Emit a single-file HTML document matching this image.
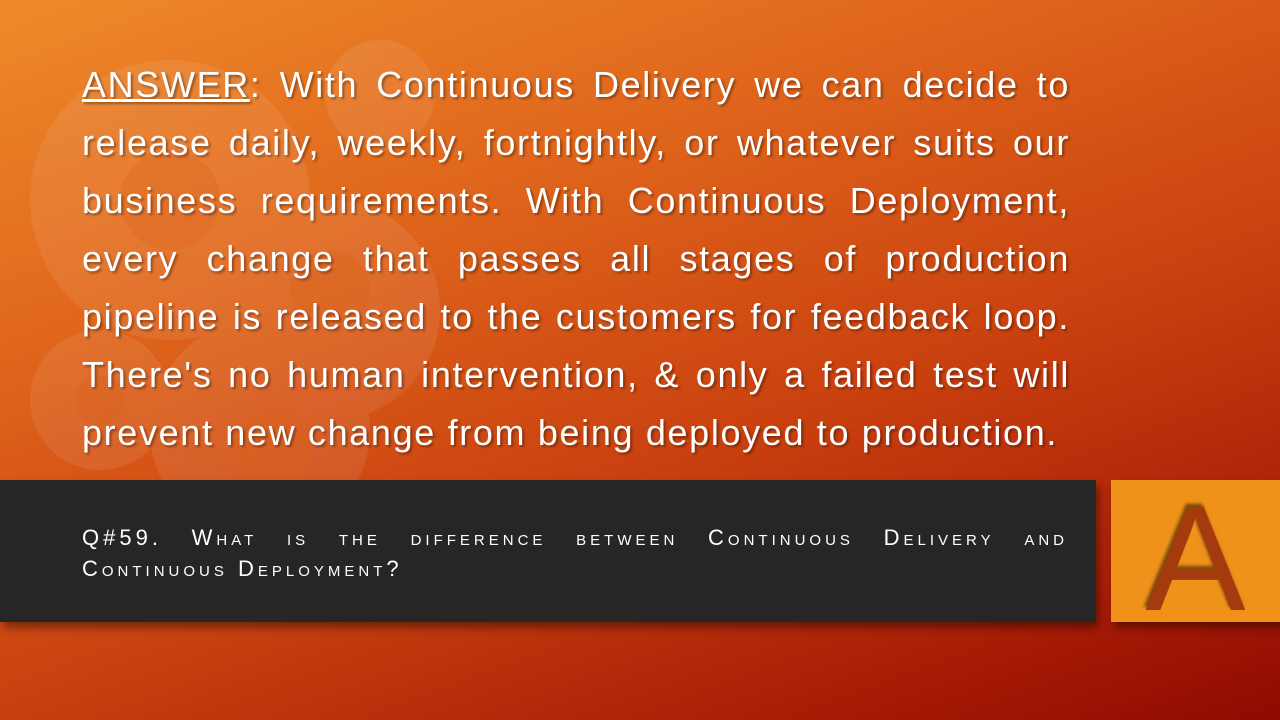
<!DOCTYPE html>
<html><head><meta charset="utf-8"><style>
body{margin:0;width:1280px;height:720px;overflow:hidden;position:relative;
background:linear-gradient(160deg,#ee8a2a 0%,#e0661c 30%,#c9400f 60%,#a81c06 85%,#8e0a00 100%);
font-family:"Liberation Sans",sans-serif;}
.gears{position:absolute;left:0;top:0}
.ans{position:absolute;left:82px;top:56px;width:988px;color:#fff;font-size:36px;line-height:58px;letter-spacing:1.65px;text-shadow:2px 2px 2px rgba(0,0,0,.35)}
.ans div{text-align:justify;text-align-last:justify;white-space:nowrap}
.ans div.last{text-align-last:left}
.bar{position:absolute;left:0;top:480px;width:1096px;height:142px;background:#262626;box-shadow:3px 6px 8px rgba(0,0,0,.4)}
.q{position:absolute;left:82px;top:522px;width:986px;color:#fff;font-size:22px;line-height:31px;font-variant:small-caps;letter-spacing:4px}
.q div{white-space:nowrap}
.q .l1{text-align:justify;text-align-last:justify}
.box{position:absolute;left:1111px;top:480px;width:169px;height:142px;background:#f0921a;box-shadow:3px 6px 8px rgba(0,0,0,.4);overflow:hidden}
.box span{position:absolute;left:0;width:169px;top:3px;text-align:center;font-size:150px;line-height:150px;color:#a53b0d;text-shadow:-2px -3px 3px rgba(0,0,0,.5)}
</style></head><body>
<svg class="gears" width="600" height="720">
<g fill="#fff" opacity="0.08">
<circle cx="170" cy="200" r="140"/><circle cx="330" cy="310" r="110"/><circle cx="100" cy="400" r="70"/><circle cx="260" cy="430" r="110"/><circle cx="380" cy="95" r="55"/>
</g>
<g fill="#d9601a" opacity="0.3">
<circle cx="170" cy="200" r="50"/><circle cx="330" cy="290" r="40"/><circle cx="270" cy="450" r="40"/><circle cx="100" cy="400" r="25"/>
</g>
</svg>
<div class="ans">
<div><u>ANSWER</u>: With Continuous Delivery we can decide to</div>
<div>release daily, weekly, fortnightly, or whatever suits our</div>
<div>business requirements. With Continuous Deployment,</div>
<div>every change that passes all stages of production</div>
<div>pipeline is released to the customers for feedback loop.</div>
<div>There's no human intervention, &amp; only a failed test will</div>
<div class="last">prevent new change from being deployed to production.</div>
</div>
<div class="bar"></div>
<div class="q"><div class="l1">Q#59. What is the difference between Continuous Delivery and</div><div>Continuous Deployment?</div></div>
<div class="box"><span>A</span></div>
</body></html>
